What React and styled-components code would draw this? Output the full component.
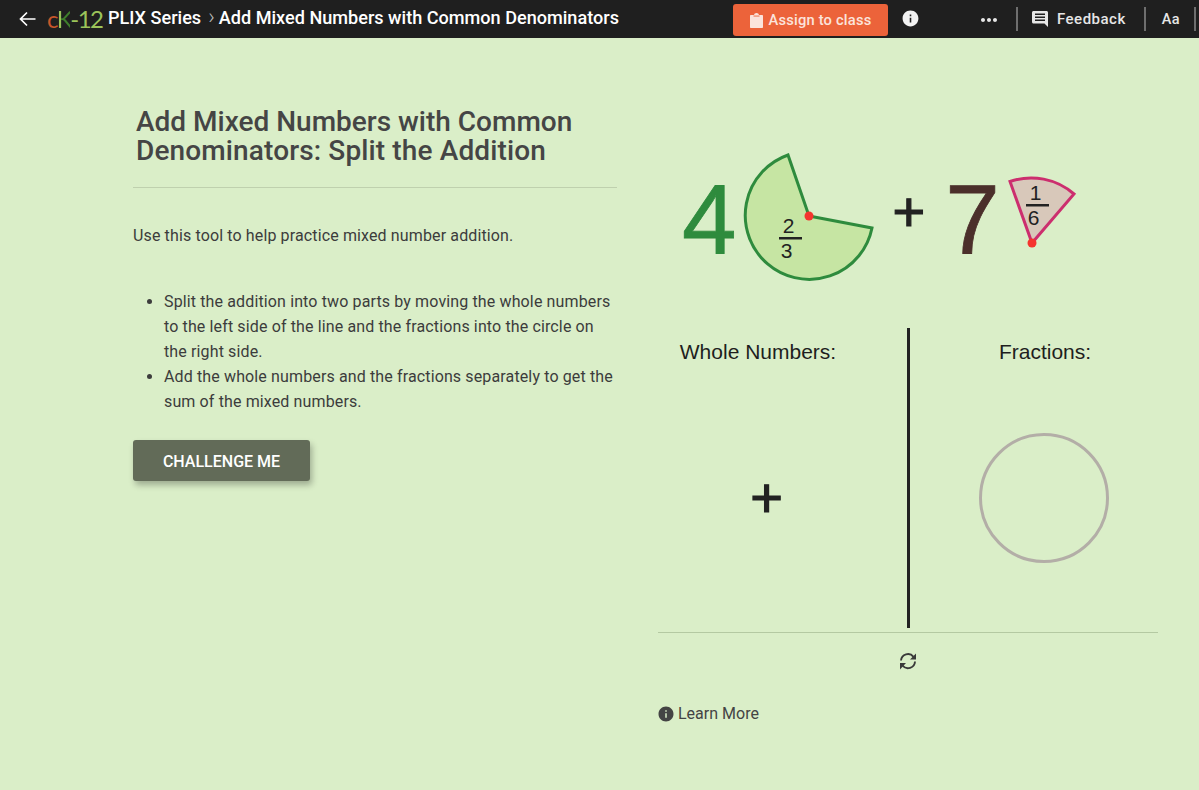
import React from 'react';
import styled, { createGlobalStyle } from 'styled-components';
import { MdInfo, MdMoreHoriz } from 'react-icons/md';

const GlobalStyle = createGlobalStyle`
  html, body {
    margin: 0;
    padding: 0;
    background: #daeec8;
    font-family: Roboto, "Liberation Sans", sans-serif;
  }
  * { box-sizing: border-box; }
`;

const Page = styled.div`
  width: 1199px;
  height: 790px;
  overflow: hidden;
  background: #daeec8;
`;

const Header = styled.header`
  height: 38px;
  background: #1f1f1f;
  color: #fff;
  display: flex;
  align-items: center;
  padding-left: 19px;
`;

const BackIcon = styled.svg`
  width: 17px;
  height: 16px;
  margin-right: 11px;
  flex: none;
`;

const Logo = styled.div`
  font-family: Lato, sans-serif;
  font-weight: 400;
  font-size: 24px;
  line-height: 36px;
  color: #9cc45a;
  width: 61px;
  flex: none;
  white-space: nowrap;
  letter-spacing: -1.6px;
`;

const LogoC = styled.span`
  color: #c8562a;
`;

const LogoK = styled.span`
  color: transparent;
  background: linear-gradient(90deg, #9cc45a 30%, #3f7f2c 30%);
  -webkit-background-clip: text;
  background-clip: text;
`;

const Crumb = styled.span`
  font-size: 18.1px;
  font-weight: 500;
  white-space: nowrap;
  margin-bottom: 4px;
`;

const CrumbSep = styled.span`
  font-size: 22px;
  font-weight: 300;
  line-height: 22px;
  color: #bbb;
  margin: 0 4px 4px 7px;
`;

const HeaderRight = styled.div`
  margin-left: auto;
  height: 100%;
  display: flex;
  align-items: center;
`;

const AssignButton = styled.button`
  width: 155px;
  height: 32px;
  margin-top: 2px;
  border: 0;
  border-radius: 3px;
  background: #ec633a;
  color: #fbe4dc;
  font-family: inherit;
  font-size: 14.7px;
  font-weight: 500;
  letter-spacing: 0.2px;
  display: flex;
  align-items: center;
  justify-content: center;
  gap: 6px;
  padding: 0;
`;

const InfoWrap = styled.div`
  width: 44px;
  display: flex;
  justify-content: center;
  font-size: 19px;
  color: #f2f2f2;
  margin-left: 1px;
  margin-bottom: 2px;
`;

const DotsWrap = styled.div`
  width: 24px;
  margin-left: 44px;
  display: flex;
  justify-content: center;
  color: #e6e6e6;
  font-size: 24px;
  margin-top: 2px;
`;

const NavDivider = styled.div`
  width: 2px;
  height: 24px;
  background: #6e6e6e;
  margin-left: ${(p) => p.$left}px;
`;

const FeedbackLink = styled.div`
  display: flex;
  align-items: center;
  color: #e6e6e6;
  font-size: 15px;
  font-weight: 500;
  letter-spacing: 0.5px;
  gap: 9px;
  margin-left: 14px;
`;

const FontLink = styled.div`
  color: #e6e6e6;
  font-size: 14.5px;
  font-weight: 500;
  letter-spacing: 0.4px;
  margin-left: 16px;
  margin-right: 14px;
`;

const HeaderEnd = styled.div`
  width: 3px;
`;

const Main = styled.main`
  display: flex;
  padding-left: 133px;
`;

const LeftPane = styled.section`
  width: 484px;
  padding-top: 69px;
`;

const Title = styled.h1`
  margin: 0;
  padding: 0 0 22px 3px;
  font-size: 28px;
  line-height: 29px;
  font-weight: 500;
  color: #454545;
  border-bottom: 1px solid #bfd0ae;
`;

const TitleTail = styled.span`
  letter-spacing: 0.13px;
`;

const Intro = styled.p`
  margin: 36px 0 0;
  font-size: 16px;
  letter-spacing: 0.13px;
  line-height: 24px;
  color: #3c3c3c;
`;

const Steps = styled.ul`
  margin: 41px 0 0;
  padding: 0 0 0 31px;
  font-size: 16px;
  letter-spacing: 0.13px;
  line-height: 25px;
  color: #3c3c3c;
`;

const ChallengeButton = styled.button`
  display: block;
  width: 177px;
  height: 41px;
  margin-top: 26px;
  padding: 2px 0 0;
  border: 0;
  border-radius: 3px;
  background: #626b58;
  color: #fff;
  font-family: inherit;
  font-size: 16px;
  font-weight: 500;
  box-shadow: 2px 4px 6px rgba(0, 0, 0, 0.28);
`;

const RightPane = styled.section`
  width: 500px;
  margin-left: 41px;
`;

const Equation = styled.div`
  height: 290px;
  padding: 126px 0 0 24px;
  display: flex;
  align-items: flex-start;
  font-family: "Liberation Sans", Arial, sans-serif;
`;

const BigNumber = styled.span`
  font-size: 98px;
  line-height: 110px;
  -webkit-text-stroke: 0.8px ${(p) => p.$color};
  color: ${(p) => p.$color};
  margin-left: ${(p) => p.$left || 0}px;
`;

const Plus = styled.span`
  font-size: 56px;
  line-height: 64px;
  color: #222;
  -webkit-text-stroke: 1.2px #222;
  margin-left: ${(p) => p.$left || 0}px;
  margin-top: ${(p) => p.$top || 0}px;
`;

const PieSvg = styled.svg`
  display: block;
  flex: none;
  margin-left: ${(p) => p.$left || 0}px;
  margin-top: ${(p) => p.$top || 0}px;
  font-family: "Liberation Sans", Arial, sans-serif;
`;

const Board = styled.div`
  height: 305px;
  display: grid;
  grid-template-columns: 249px 3px 1fr;
  border-bottom: 1px solid #b4c9a2;
`;

const BoardColumn = styled.div`
  display: flex;
  flex-direction: column;
  align-items: center;
  padding-top: 12px;
  font-family: "Liberation Sans", Arial, sans-serif;
`;

const BoardDivider = styled.div`
  height: 300px;
  background: #222;
`;

const BoardLabel = styled.div`
  font-size: 21px;
  line-height: 24px;
  color: #1e1e1e;
  width: 100%;
  text-align: center;
  padding: ${(p) => p.$pad};
`;

const DropCircle = styled.div`
  width: 130px;
  height: 130px;
  border-radius: 50%;
  border: 3px solid #b3aea7;
  margin-top: 69px;
  margin-left: 20px;
`;

const BoardPlus = styled(Plus)`
  margin-top: 102px;
  margin-left: 0;
  margin-right: 32px;
`;

const ResetRow = styled.div`
  display: flex;
  justify-content: center;
  padding-top: 19px;
  height: 60px;
`;

const ResetIcon = styled.svg`
  width: 18px;
  height: 19px;
`;

const LearnMore = styled.div`
  display: flex;
  align-items: center;
  gap: 3px;
  margin-top: 10px;
  margin-left: -1px;
  font-size: 16px;
  line-height: 22px;
  color: #444;
`;

const Pie = ({ width, height, x, y, d, fill, stroke, center, top, bottom, barX, barY, ...rest }) => (
  <PieSvg width={width} height={height} viewBox={`${x} ${y} ${width} ${height}`} {...rest}>
    <path d={d} fill={fill} stroke={stroke} strokeWidth="3" strokeLinejoin="miter" />
    <circle cx={center[0]} cy={center[1]} r="4.5" fill="#f5342e" />
    <text x={barX + 9.5} y={barY - 5} fontSize="21" textAnchor="middle" fill="#222">{top}</text>
    <rect x={barX} y={barY - 1} width="23" height="2.5" fill="#222" />
    <text x={barX + 7.5} y={barY + 20} fontSize="21" textAnchor="middle" fill="#222">{bottom}</text>
  </PieSvg>
);

const ClipboardIcon = () => (
  <svg width="13" height="15" viewBox="0 0 13 15">
    <path d="M1 2h3C4.200.8 5.200 0 6.500 0S8.800.8 9 2h3c.6 0 1 .4 1 1v11c0 .6-.4 1-1 1H1c-.6 0-1-.4-1-1V3c0-.6.4-1 1-1z" fill="#fbe4dc" />
    <rect x="3.500" y="2.200" width="6" height="1.800" fill="#ec633a" opacity="0.5" />
  </svg>
);

const FeedbackIcon = () => (
  <svg width="16" height="16" viewBox="0 0 16 16">
    <path d="M1.500 0h13c.8 0 1.500.7 1.500 1.500V16l-3.500-3.500h-11C.7 12.500 0 11.800 0 11V1.500C0 .7.700 0 1.500 0z" fill="#e6e6e6" />
    <rect x="3" y="2.500" width="10" height="1.500" fill="#1f1f1f" />
    <rect x="3" y="5.500" width="10" height="1.500" fill="#1f1f1f" />
    <rect x="3" y="8.500" width="10" height="1.500" fill="#1f1f1f" />
  </svg>
);

const App = () => (
  <Page>
    <GlobalStyle />
    <Header>
      <BackIcon viewBox="0 0 17 16" fill="none" stroke="#fff" strokeWidth="1.7">
        <path d="M16.500 8H1.500M8 1.500L1.500 8L8 14.500" />
      </BackIcon>
      <Logo>
        <LogoC>c</LogoC>
        <LogoK>K</LogoK>-12
      </Logo>
      <Crumb>PLIX Series</Crumb>
      <CrumbSep>›</CrumbSep>
      <Crumb>Add Mixed Numbers with Common Denominators</Crumb>
      <HeaderRight>
        <AssignButton>
          <ClipboardIcon />
          Assign to class
        </AssignButton>
        <InfoWrap>
          <MdInfo />
        </InfoWrap>
        <DotsWrap>
          <MdMoreHoriz />
        </DotsWrap>
        <NavDivider $left={15} />
        <FeedbackLink>
          <FeedbackIcon />
          Feedback
        </FeedbackLink>
        <NavDivider $left={18} />
        <FontLink>Aa</FontLink>
        <NavDivider $left={0} />
        <HeaderEnd />
      </HeaderRight>
    </Header>
    <Main>
      <LeftPane>
        <Title>
          Add Mixed Numbers with Common
          <br />
          <TitleTail>Denominators: Split the Addition</TitleTail>
        </Title>
        <Intro>Use this tool to help practice mixed number addition.</Intro>
        <Steps>
          <li>
            Split the addition into two parts by moving the whole numbers to the left side of the
            line and the fractions into the circle on the right side.
          </li>
          <li>
            Add the whole numbers and the fractions separately to get the sum of the mixed numbers.
          </li>
        </Steps>
        <ChallengeButton>CHALLENGE ME</ChallengeButton>
      </LeftPane>
      <RightPane>
        <Equation>
          <BigNumber $color="#2e8b3d">4</BigNumber>
          <Pie
            $left={3}
            $top={-14}
            width={138}
            height={136}
            x={740}
            y={150}
            d="M809 216L872 228A64 64 0 1 1 788 155Z"
            fill="#c6e5a3"
            stroke="#2e8b3d"
            center={[809, 216]}
            top="2"
            bottom="3"
            barX={779}
            barY={238}
          />
          <Plus $left={15} $top={16}>+</Plus>
          <BigNumber $color="#4b2f2b" $left={20}>7</BigNumber>
          <Pie
            $left={6}
            $top={12}
            width={72}
            height={74}
            x={1006}
            y={176}
            d="M1032 243L1010 181.500A65 65 0 0 1 1074 194Z"
            fill="#d8c8ba"
            stroke="#cc2e6e"
            center={[1032, 243]}
            top="1"
            bottom="6"
            barX={1026}
            barY={205}
          />
        </Equation>
        <Board>
          <BoardColumn>
            <BoardLabel $pad="0 49px 0 0">Whole Numbers:</BoardLabel>
            <BoardPlus>+</BoardPlus>
          </BoardColumn>
          <BoardDivider />
          <BoardColumn>
            <BoardLabel $pad="0 0 0 22px">Fractions:</BoardLabel>
            <DropCircle />
          </BoardColumn>
        </Board>
        <ResetRow>
          <ResetIcon viewBox="0 0 18 19" fill="none">
            <path d="M2 8.500A7 7 0 0 1 14.500 4.800" stroke="#3a3a3a" strokeWidth="1.900" />
            <path d="M16 9.500A7 7 0 0 1 3.500 13.500" stroke="#3a3a3a" strokeWidth="1.900" />
            <path d="M17 1.500V7.500H11Z" fill="#3a3a3a" />
            <path d="M1 17.500V11H7Z" fill="#3a3a3a" />
          </ResetIcon>
        </ResetRow>
        <LearnMore>
          <MdInfo size={18} />
          Learn More
        </LearnMore>
      </RightPane>
    </Main>
  </Page>
);

export default App;
